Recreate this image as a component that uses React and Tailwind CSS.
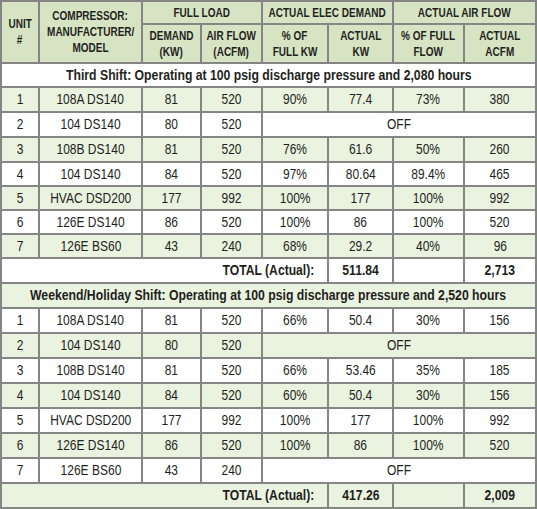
import React from "react";

const font = { fontFamily: '"Liberation Sans", Arial, sans-serif' };

const thirdShift = [
  ["1", "108A DS140", "81", "520", "90%", "77.4", "73%", "380"],
  ["2", "104 DS140", "80", "520", null],
  ["3", "108B DS140", "81", "520", "76%", "61.6", "50%", "260"],
  ["4", "104 DS140", "84", "520", "97%", "80.64", "89.4%", "465"],
  ["5", "HVAC DSD200", "177", "992", "100%", "177", "100%", "992"],
  ["6", "126E DS140", "86", "520", "100%", "86", "100%", "520"],
  ["7", "126E BS60", "43", "240", "68%", "29.2", "40%", "96"],
];

const weekendShift = [
  ["1", "108A DS140", "81", "520", "66%", "50.4", "30%", "156"],
  ["2", "104 DS140", "80", "520", null],
  ["3", "108B DS140", "81", "520", "66%", "53.46", "35%", "185"],
  ["4", "104 DS140", "84", "520", "60%", "50.4", "30%", "156"],
  ["5", "HVAC DSD200", "177", "992", "100%", "177", "100%", "992"],
  ["6", "126E DS140", "86", "520", "100%", "86", "100%", "520"],
  ["7", "126E BS60", "43", "240", null],
];

// condensed look: the page has no narrow face, so squeeze Arial-width text
const Sq = ({ children, className = "scale-x-[0.8]" }) => (
  <span className={`inline-block whitespace-nowrap ${className}`}>{children}</span>
);

const Head = ({ lines, className = "" }) => (
  <div className={`bg-[#d7e4c4] flex flex-col items-center justify-center text-center font-bold text-[13px] leading-[16px] text-[#231f20] ${className}`}>
    {lines.map((l) => (
      <Sq key={l} className="scale-x-[0.77]">{l}</Sq>
    ))}
  </div>
);

const Cell = ({ children, bg, className = "" }) => (
  <div className={`${bg} flex items-center justify-center text-[15px] text-[#231f20] ${className}`}>
    {children}
  </div>
);

const Block = ({ title, rows, total, startGreen }) => {
  const bgFor = (i) => ((i % 2 === 0) === startGreen ? "bg-[#eaf2e0]" : "bg-white");
  const tb = bgFor(rows.length + 1);
  return (
    <>
      <Cell bg={bgFor(0)} className="col-span-8 font-bold">
        <Sq className="scale-x-[0.815]">{title}</Sq>
      </Cell>
      {rows.map((r, idx) => {
        const bg = bgFor(idx + 1);
        return (
          <React.Fragment key={r[0]}>
            {r.slice(0, 4).map((v, j) => (
              <Cell key={j} bg={bg}><Sq>{v}</Sq></Cell>
            ))}
            {r[4] === null ? (
              <Cell bg={bg} className="col-span-4"><Sq>OFF</Sq></Cell>
            ) : (
              r.slice(4).map((v, j) => (
                <Cell key={j + 4} bg={bg}><Sq>{v}</Sq></Cell>
              ))
            )}
          </React.Fragment>
        );
      })}
      <Cell bg={tb} className="col-span-5 !justify-end pr-[13px] font-bold">
        <Sq className="scale-x-[0.81] origin-right">TOTAL (Actual):</Sq>
      </Cell>
      <Cell bg={tb} className="font-bold"><Sq className="scale-x-[0.81]">{total[0]}</Sq></Cell>
      <Cell bg={tb}></Cell>
      <Cell bg={tb} className="font-bold"><Sq className="scale-x-[0.81]">{total[1]}</Sq></Cell>
    </>
  );
};

export default function App() {
  return (
    <div style={font} className="w-[537px] h-[509px] bg-white">
      <div className="grid bg-[#858585] p-[2px] gap-[2px] grid-cols-[36px_101px_57px_59px_64px_63px_69px_70px] grid-rows-[21px_37px_22px_23px_23px_23px_22px_22px_22px_22px_23px_23px_23px_23px_23px_23px_23px_23px_23px_23px]">
        <Head className="row-span-2" lines={["UNIT", "#"]} />
        <Head className="row-span-2" lines={["COMPRESSOR:", "MANUFACTURER/", "MODEL"]} />
        <Head className="col-span-2" lines={["FULL LOAD"]} />
        <Head className="col-span-2" lines={["ACTUAL ELEC DEMAND"]} />
        <Head className="col-span-2" lines={["ACTUAL AIR FLOW"]} />
        <Head lines={["DEMAND", "(KW)"]} />
        <Head lines={["AIR FLOW", "(ACFM)"]} />
        <Head lines={["% OF", "FULL KW"]} />
        <Head lines={["ACTUAL", "KW"]} />
        <Head lines={["% OF FULL", "FLOW"]} />
        <Head lines={["ACTUAL", "ACFM"]} />
        <Block
          title="Third Shift: Operating at 100 psig discharge pressure and 2,080 hours"
          rows={thirdShift}
          total={["511.84", "2,713"]}
          startGreen={false}
        />
        <Block
          title="Weekend/Holiday Shift: Operating at 100 psig discharge pressure and 2,520 hours"
          rows={weekendShift}
          total={["417.26", "2,009"]}
          startGreen={true}
        />
      </div>
    </div>
  );
}
